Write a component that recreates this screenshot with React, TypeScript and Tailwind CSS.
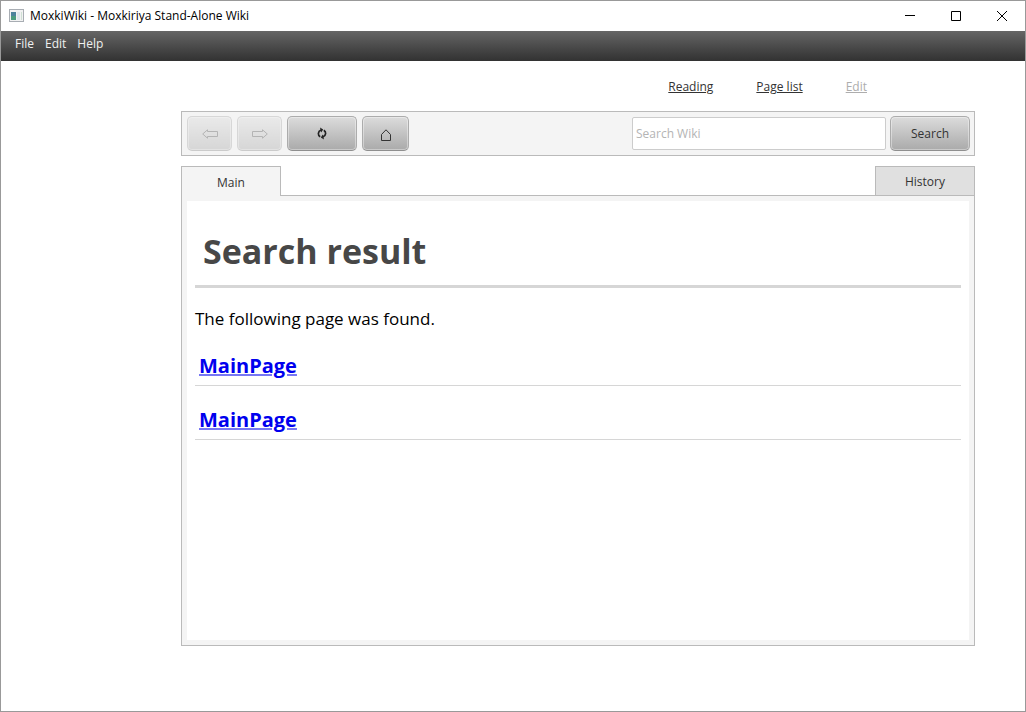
import { useState } from "react";

const NAV_BUTTON =
  "flex items-center justify-center h-[35px] rounded-[5px] border border-[#acacac] border-b-[#8f8f8f] bg-linear-to-b from-[#dcdcdc] to-[#aaaaaa] shadow-[inset_0_0_0_1px_#ffffff60] disabled:opacity-40";

export default function App() {
  const [query, setQuery] = useState("");

  return (
    <div className="min-h-screen flex flex-col border border-[#999999] bg-white font-['Open_Sans','Noto_Sans',sans-serif] text-xs text-[#333333]">
      {/* TITLE BAR */}
      <header className="flex items-center h-[30px] pl-2 text-black">
        <AppIcon />
        <h1 className="ml-1.5">MoxkiWiki - Moxkiriya Stand-Alone Wiki</h1>
        <div className="ml-auto flex h-full">
          <WindowButton label="Minimize" d="M0 4.5H10" />
          <WindowButton label="Maximize" d="M0.5 0.5H9.5V9.5H0.5Z" />
          <WindowButton label="Close" d="M0 0L10 10M10 0L0 10" />
        </div>
      </header>

      {/* MENU */}
      <nav className="flex items-start gap-[11px] h-[30px] pl-3.5 pt-[5px] bg-linear-to-b from-[#666666] to-[#323232] text-[#f0f0f0]">
        <button>File</button>
        <button>Edit</button>
        <button>Help</button>
      </nav>

      <main className="flex-1 flex flex-col ml-[180px] mr-[50px] pt-4 pb-[65px]">
        {/* PAGE LINKS */}
        <div className="flex justify-end pr-[108px] gap-[43px] h-[34px] pt-0.5">
          <a href="#reading" className="underline">Reading</a>
          <a href="#pages" className="underline">Page list</a>
          <a aria-disabled="true" className="underline text-[#adadad]">Edit</a>
        </div>

        {/* TOOLBAR */}
        <form
          onSubmit={(e) => e.preventDefault()}
          className="flex items-center gap-[5px] h-[45px] pl-[5px] pr-1 border border-[#bababa] bg-[#f4f4f4]"
        >
          <button type="button" disabled aria-label="Back" className={`${NAV_BUTTON} w-[45px]`}>
            <ArrowIcon />
          </button>
          <button type="button" disabled aria-label="Forward" className={`${NAV_BUTTON} w-[45px]`}>
            <ArrowIcon className="rotate-180" />
          </button>
          <button type="button" aria-label="Reload" className={`${NAV_BUTTON} w-[70px]`}>
            <ReloadIcon />
          </button>
          <button type="button" aria-label="Home" className={`${NAV_BUTTON} w-[47px]`}>
            <HomeIcon />
          </button>
          <div className="ml-auto flex items-center gap-1">
            <input
              type="text"
              aria-label="Search Wiki"
              placeholder="Search Wiki"
              value={query}
              onChange={(e) => setQuery(e.target.value)}
              className="w-[254px] h-[33px] px-[3px] rounded-[2px] border border-[#cccccc] bg-white placeholder:text-[#b4b4b4]"
            />
            <button type="submit" className={`${NAV_BUTTON} w-20`}>Search</button>
          </div>
        </form>

        {/* TABS */}
        <div role="tablist" className="flex justify-between h-[30px] mt-2.5">
          <button role="tab" aria-selected="true" className="w-[100px] pt-0.5 border border-b-0 border-[#bababa] bg-[#f4f4f4]">
            Main
          </button>
          <div className="flex-1 border-b border-[#bababa]" />
          <button role="tab" aria-selected="false" className="w-[100px] pt-0.5 border border-[#bababa] bg-[#e0e0e0]">
            History
          </button>
        </div>

        {/* PAGE */}
        <section role="tabpanel" className="flex-1 flex border border-t-0 border-[#bababa] bg-[#f4f4f4] p-[5px]">
          <article className="flex-1 bg-white px-2 text-black">
            <h2 className="h-[87px] pt-6 pl-2 border-b-3 border-[#d6d6d6] text-[34px] leading-[52px] font-bold text-[#474747]">
              Search result
            </h2>
            <p className="mt-[18px] text-[17px] leading-[26px]">The following page was found.</p>
            <ResultLink title="MainPage" />
            <ResultLink title="MainPage" />
          </article>
        </section>
      </main>
    </div>
  );
}

const ResultLink = ({ title }: { title: string }) => (
  <h3 className="h-[38px] mt-4 pl-1 border-b border-[#d6d6d6] text-xl leading-9 font-bold">
    <a href="#page" className="text-[#0000ee] underline decoration-[#7777f4] decoration-2 underline-offset-1">{title}</a>
  </h3>
);

const WindowButton = ({ label, d }: { label: string; d: string }) => (
  <button aria-label={label} className="flex items-center justify-center w-[46px]">
    <svg width="10" height="10" viewBox="0 0 10 10" fill="none" stroke="#000000">
      <path d={d} />
    </svg>
  </button>
);

const AppIcon = () => (
  <svg width="15" height="13" viewBox="0 0 15 13" className="mb-0.5" aria-hidden="true">
    <rect x="0.5" y="0.5" width="14" height="12" fill="#f2f2f2" stroke="#a8adb3" />
    <rect x="2" y="3" width="5" height="4" fill="#4c829a" />
    <rect x="2" y="7" width="5" height="4" fill="#4b9b7d" />
    <rect x="8" y="3" width="3" height="8" fill="#dfe6ea" />
    <rect x="12" y="3" width="1" height="8" fill="#cfe0d4" />
  </svg>
);

const ArrowIcon = ({ className = "" }: { className?: string }) => (
  <svg width="16" height="10" viewBox="0 0 16 10" fill="none" stroke="#555555" className={className}>
    <path d="M0.7 5L5.5 0.8V2.5H15.5V7.5H5.5V9.2Z" />
  </svg>
);

const ReloadIcon = () => (
  <svg width="10" height="13" viewBox="0 0 10 13" fill="none" stroke="#222222" strokeWidth="1.7">
    <path d="M3.2 9.8C0.6 8.2 0.6 4.4 4.2 3M6.8 3.2C9.4 4.8 9.4 8.6 5.8 10" />
    <path d="M3 0.6L6.2 2.6L4.2 5.6ZM7 12.4L3.8 10.4L5.8 7.4Z" fill="#222222" stroke="none" />
  </svg>
);

const HomeIcon = () => (
  <svg width="12" height="13" viewBox="0 0 12 13" fill="none" stroke="#333333" className="mt-[3px]">
    <path d="M1.5 11.5V5.5L6 0.8L10.5 5.5V11.5Z" />
  </svg>
);
